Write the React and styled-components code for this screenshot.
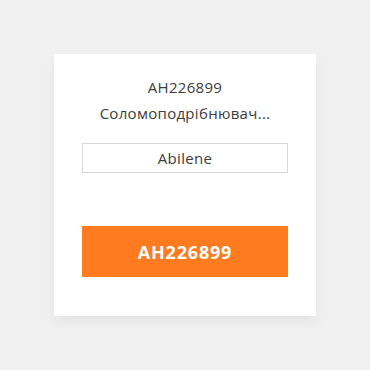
import React from "react";
import styled, { createGlobalStyle } from "styled-components";

const Global = createGlobalStyle`
  html, body { margin: 0; padding: 0; background: #f1f1f1; }
  body { font-family: "Open Sans", "Liberation Sans", sans-serif; }
`;

const Page = styled.div`
  padding: 54px;
  display: flex;
`;

const Card = styled.div`
  width: 262px;
  height: 262px;
  box-sizing: border-box;
  background: #fff;
  box-shadow: 0 6px 14px rgba(0, 0, 0, 0.06);
  padding: 20px 28px 0;
  display: flex;
  flex-direction: column;
  align-items: stretch;
`;

const Line = styled.div`
  font-size: 15px;
  line-height: 26px;
  letter-spacing: 0.3px;
  color: #3c3c3c;
  text-align: center;
  white-space: nowrap;
  overflow: hidden;
`;

const Field = styled.div`
  margin-top: 17px;
  height: 30px;
  box-sizing: border-box;
  border: 1px solid #d8d8d8;
  display: flex;
  align-items: center;
  justify-content: center;
  font-size: 15px;
  letter-spacing: 0.3px;
  color: #3c3c3c;
`;

const Button = styled.button`
  margin-top: 53px;
  height: 51px;
  border: none;
  background: #fe7b20;
  color: #fff;
  font-family: "Open Sans", "Liberation Sans", sans-serif;
  font-weight: 700;
  font-size: 18px;
  letter-spacing: 0.8px;
  cursor: pointer;
`;

export default function App() {
  return (
    <>
      <Global />
      <Page>
        <Card>
          <Line>AH226899</Line>
          <Line>Соломоподрібнювач...</Line>
          <Field>Abilene</Field>
          <Button>AH226899</Button>
        </Card>
      </Page>
    </>
  );
}
